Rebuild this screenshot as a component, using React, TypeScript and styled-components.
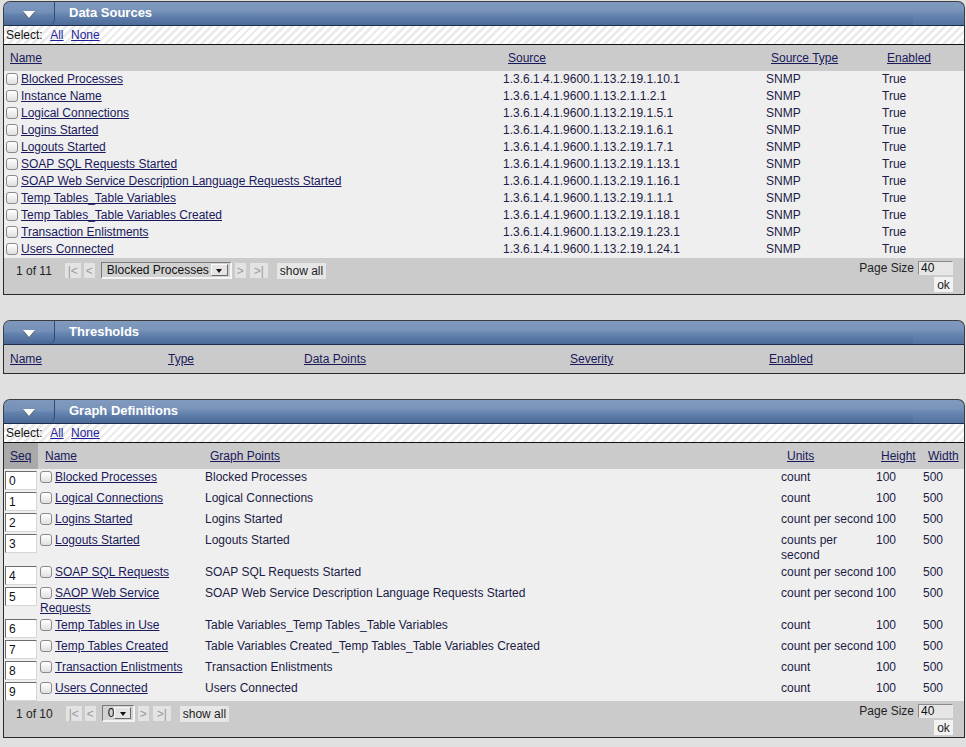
import React from "react";
import styled, { createGlobalStyle } from "styled-components";

const GlobalStyle = createGlobalStyle`
  html, body { margin: 0; padding: 0; background: #e0e0e0; }
  body {
    font-family: "Liberation Sans", Arial, Helvetica, sans-serif;
    font-size: 12px;
    color: #1b1b45;
  }
  * { box-sizing: border-box; }
`;

const Page = styled.div`
  display: flex;
  flex-direction: column;
  gap: 25px;
  padding: 1px 1px 9px 3px;
`;

const Panel = styled.section`
  display: flex;
  flex-direction: column;
`;

const Header = styled.div`
  display: flex;
  align-items: stretch;
  height: 25px;
  border: 1px solid #3e3e3e;
  border-bottom-color: #1d2d4c;
  border-radius: 7px 7px 0 0;
  overflow: hidden;
  position: relative;
  background: linear-gradient(
    to bottom,
    #819abf 0%,
    #7993b9 40%,
    #6b89b3 50%,
    #5a79a6 72%,
    #4c6b99 100%
  );
  &::after {
    content: "";
    position: absolute;
    right: 0;
    bottom: 0;
    width: 51px;
    height: 13px;
    border-top-left-radius: 6px;
    background: linear-gradient(to bottom, #6f8cb5 0%, #5877a4 100%);
    opacity: 0.6;
  }
`;

const Toggle = styled.div`
  width: 51px;
  display: flex;
  align-items: center;
  justify-content: center;
  border-right: 1px solid #2f4a76;
  background: linear-gradient(
    to bottom,
    #7d97bd 0%,
    #7590b7 45%,
    #6282ae 55%,
    #4a6897 100%
  );
  border-bottom-right-radius: 6px;
`;

const Triangle = styled.span`
  width: 0;
  height: 0;
  border-left: 6px solid transparent;
  border-right: 6px solid transparent;
  border-top: 7px solid #ffffff;
  filter: drop-shadow(0 1px 0 #5a5a5a);
  margin-top: 1px;
`;

const Title = styled.div`
  padding-left: 14px;
  color: #ffffff;
  font-weight: bold;
  font-size: 13px;
  line-height: 22px;
`;

const Body = styled.div`
  border-left: 1px solid #2a2a2a;
  border-right: 1px solid #2a2a2a;
  border-bottom: 1px solid #2a2a2a;
  display: flex;
  flex-direction: column;
`;

const SelectBar = styled.div`
  height: 19px;
  border-bottom: 1px solid #111;
  display: flex;
  align-items: center;
  gap: 7.5px;
  padding-left: 2px;
  color: #111;
  background: repeating-linear-gradient(
    135deg,
    #ffffff 0px,
    #ffffff 3px,
    #ebebeb 3px,
    #ebebeb 5.7px
  );
`;

const SelLink = styled.a`
  color: #1f1f9c;
  text-decoration: underline;
  cursor: pointer;
`;

const GridRow = styled.div<{ $cols: string; $h?: number; $bg: string }>`
  display: grid;
  grid-template-columns: ${(p) => p.$cols};
  background: ${(p) => p.$bg};
  ${(p) => (p.$h ? `height: ${p.$h}px;` : "")}
  align-items: stretch;
`;

const HeadCell = styled.div<{ $pl?: number; $active?: boolean }>`
  display: flex;
  align-items: center;
  padding-left: ${(p) => p.$pl ?? 6}px;
  background: ${(p) => (p.$active ? "#a9a9a9" : "transparent")};
  white-space: nowrap;
`;

const Cell = styled.div<{ $pl?: number }>`
  padding: 1px 0 1px ${(p) => p.$pl ?? 1}px;
  line-height: 15px;
  min-width: 0;
`;

const Link = styled.a`
  color: #19195c;
  text-decoration: underline;
  cursor: pointer;
`;

const Check = styled.span`
  display: inline-block;
  width: 12px;
  height: 12px;
  border: 1px solid #8a8a8a;
  border-radius: 3px;
  background: linear-gradient(to bottom, #ffffff, #e0e0e0);
  vertical-align: -2px;
  margin-right: 3px;
`;

const SeqInput = styled.input`
  width: 32px;
  height: 19px;
  margin: 1px 0 -1px 0;
  padding: 0 3px;
  border: 1px solid;
  border-color: #6c6c6c #d6d6d6 #d6d6d6 #6c6c6c;
  background: #ffffff;
  font-family: inherit;
  font-size: 12px;
  color: #111;
  display: block;
`;

/* ---------- Pager ---------- */

const Pager = styled.div`
  height: 36px;
  background: #cbcbcb;
  display: flex;
  justify-content: space-between;
  align-items: flex-start;
  padding: 3px 11px 0 12px;
  color: #222;
`;

const PagerLeft = styled.div`
  display: flex;
  align-items: center;
  height: 19px;
  white-space: nowrap;
`;

const CountText = styled.span`
  margin-right: 13px;
`;

const NavBtn = styled.span<{ $w: number; $ml?: number }>`
  display: inline-flex;
  align-items: center;
  justify-content: center;
  width: ${(p) => p.$w}px;
  height: 15px;
  margin-left: ${(p) => p.$ml ?? 0}px;
  background: #e3e3e3;
  color: #9a9a9a;
  font-size: 12px;
`;

const DropDown = styled.div<{ $w: number }>`
  display: inline-flex;
  align-items: center;
  width: ${(p) => p.$w}px;
  height: 17px;
  margin-left: 6px;
  padding: 0 2px 0 5px;
  border: 1px solid;
  border-width: 1px 2px 2px 1px;
  border-color: #7a7a7a #f4f4f4 #f4f4f4 #7a7a7a;
  background: #d2d2d2;
  color: #111;
  white-space: nowrap;
`;

const DropArrow = styled.span`
  width: 17px;
  height: 12px;
  margin-left: auto;
  flex-shrink: 0;
  display: inline-flex;
  align-items: center;
  justify-content: center;
  background: #e4e4e4;
  border: 1px solid;
  border-color: #fafafa #6a6a6a #6a6a6a #fafafa;
  &::after {
    content: "";
    border-left: 3.5px solid transparent;
    border-right: 3.5px solid transparent;
    border-top: 4px solid #111;
    margin-top: 1px;
  }
`;

const ShowAll = styled.span`
  display: inline-flex;
  align-items: center;
  height: 16px;
  margin-left: 9px;
  padding: 0 3px;
  background: #e6e6e6;
  color: #222;
`;

const PagerRight = styled.div`
  display: flex;
  flex-direction: column;
  align-items: flex-end;
  gap: 2px;
`;

const SizeRow = styled.div`
  display: flex;
  align-items: center;
  gap: 4px;
`;

const SizeInput = styled.input`
  width: 35px;
  height: 14px;
  padding: 0 2px;
  border: 1px solid;
  border-color: #8a8a8a #e8e8e8 #e8e8e8 #8a8a8a;
  background: #e6e6e6;
  font-family: inherit;
  font-size: 12px;
  color: #111;
`;

const OkBtn = styled.span`
  display: inline-flex;
  align-items: center;
  justify-content: center;
  width: 19px;
  height: 15px;
  background: #f2f2f2;
  color: #222;
`;

type PagerProps = { count: string; current: string; dropWidth: number };

function PagerBar({ count, current, dropWidth }: PagerProps) {
  return (
    <Pager>
      <PagerLeft>
        <CountText>{count}</CountText>
        <NavBtn $w={16} $ml={0}>|&lt;</NavBtn>
        <NavBtn $w={11} $ml={3}>&lt;</NavBtn>
        <DropDown $w={dropWidth}>
          <span>{current}</span>
          <DropArrow />
        </DropDown>
        <NavBtn $w={11} $ml={3}>&gt;</NavBtn>
        <NavBtn $w={18} $ml={4}>&gt;|</NavBtn>
        <ShowAll>show all</ShowAll>
      </PagerLeft>
      <PagerRight>
        <SizeRow>
          <span>Page Size</span>
          <SizeInput readOnly value="40" />
        </SizeRow>
        <OkBtn>ok</OkBtn>
      </PagerRight>
    </Pager>
  );
}

function PanelHeader({ title }: { title: string }) {
  return (
    <Header>
      <Toggle>
        <Triangle />
      </Toggle>
      <Title>{title}</Title>
    </Header>
  );
}

function Selector() {
  return (
    <SelectBar>
      <span>Select:</span>
      <SelLink>All</SelLink>
      <SelLink>None</SelLink>
    </SelectBar>
  );
}

/* ---------- Data ---------- */

const dsRows: [string, string][] = [
  ["Blocked Processes", "1.3.6.1.4.1.9600.1.13.2.19.1.10.1"],
  ["Instance Name", "1.3.6.1.4.1.9600.1.13.2.1.1.2.1"],
  ["Logical Connections", "1.3.6.1.4.1.9600.1.13.2.19.1.5.1"],
  ["Logins Started", "1.3.6.1.4.1.9600.1.13.2.19.1.6.1"],
  ["Logouts Started", "1.3.6.1.4.1.9600.1.13.2.19.1.7.1"],
  ["SOAP SQL Requests Started", "1.3.6.1.4.1.9600.1.13.2.19.1.13.1"],
  [
    "SOAP Web Service Description Language Requests Started",
    "1.3.6.1.4.1.9600.1.13.2.19.1.16.1",
  ],
  ["Temp Tables_Table Variables", "1.3.6.1.4.1.9600.1.13.2.19.1.1.1"],
  ["Temp Tables_Table Variables Created", "1.3.6.1.4.1.9600.1.13.2.19.1.18.1"],
  ["Transaction Enlistments", "1.3.6.1.4.1.9600.1.13.2.19.1.23.1"],
  ["Users Connected", "1.3.6.1.4.1.9600.1.13.2.19.1.24.1"],
];

const gdRows: [string, string, string][] = [
  ["Blocked Processes", "Blocked Processes", "count"],
  ["Logical Connections", "Logical Connections", "count"],
  ["Logins Started", "Logins Started", "count per second"],
  ["Logouts Started", "Logouts Started", "counts per second"],
  ["SOAP SQL Requests", "SOAP SQL Requests Started", "count per second"],
  [
    "SAOP Web Service Requests",
    "SOAP Web Service Description Language Requests Started",
    "count per second",
  ],
  ["Temp Tables in Use", "Table Variables_Temp Tables_Table Variables", "count"],
  [
    "Temp Tables Created",
    "Table Variables Created_Temp Tables_Table Variables Created",
    "count per second",
  ],
  ["Transaction Enlistments", "Transaction Enlistments", "count"],
  ["Users Connected", "Users Connected", "count"],
];

const DS_COLS = "498px 263px 116px 1fr";
const TH_COLS = "158px 136px 266px 199px 1fr";
const GD_COLS = "34px 165px 576px 95px 47px 1fr";

const HEAD_BG = "#cbcbcb";
const ROW_BG = "#efefef";

export default function App() {
  return (
    <>
      <GlobalStyle />
      <Page>
        {/* Data Sources */}
        <Panel>
          <PanelHeader title="Data Sources" />
          <Body>
            <Selector />
            <GridRow $cols={DS_COLS} $h={26} $bg={HEAD_BG}>
              <HeadCell><Link>Name</Link></HeadCell>
              <HeadCell><Link>Source</Link></HeadCell>
              <HeadCell><Link>Source Type</Link></HeadCell>
              <HeadCell><Link>Enabled</Link></HeadCell>
            </GridRow>
            {dsRows.map(([name, oid]) => (
              <GridRow key={name} $cols={DS_COLS} $h={17} $bg={ROW_BG}>
                <Cell $pl={2}>
                  <Check />
                  <Link>{name}</Link>
                </Cell>
                <Cell>{oid}</Cell>
                <Cell>SNMP</Cell>
                <Cell>True</Cell>
              </GridRow>
            ))}
            <PagerBar count="1 of 11" current="Blocked Processes" dropWidth={131} />
          </Body>
        </Panel>

        {/* Thresholds */}
        <Panel>
          <PanelHeader title="Thresholds" />
          <Body>
            <GridRow $cols={TH_COLS} $h={28} $bg={HEAD_BG}>
              <HeadCell><Link>Name</Link></HeadCell>
              <HeadCell><Link>Type</Link></HeadCell>
              <HeadCell><Link>Data Points</Link></HeadCell>
              <HeadCell><Link>Severity</Link></HeadCell>
              <HeadCell><Link>Enabled</Link></HeadCell>
            </GridRow>
          </Body>
        </Panel>

        {/* Graph Definitions */}
        <Panel>
          <PanelHeader title="Graph Definitions" />
          <Body>
            <Selector />
            <GridRow $cols={GD_COLS} $h={26} $bg={HEAD_BG}>
              <HeadCell $active><Link>Seq</Link></HeadCell>
              <HeadCell $pl={7}><Link>Name</Link></HeadCell>
              <HeadCell $pl={7}><Link>Graph Points</Link></HeadCell>
              <HeadCell $pl={8}><Link>Units</Link></HeadCell>
              <HeadCell $pl={7}><Link>Height</Link></HeadCell>
              <HeadCell $pl={7}><Link>Width</Link></HeadCell>
            </GridRow>
            {gdRows.map(([name, points, units], i) => (
              <GridRow key={name} $cols={GD_COLS} $bg={ROW_BG}>
                <Cell $pl={1}>
                  <SeqInput readOnly value={String(i)} />
                </Cell>
                <Cell $pl={2}>
                  <Check />
                  <Link>{name}</Link>
                </Cell>
                <Cell $pl={2}>{points}</Cell>
                <Cell $pl={2}>{units}</Cell>
                <Cell $pl={2}>100</Cell>
                <Cell $pl={2}>500</Cell>
              </GridRow>
            ))}
            <PagerBar count="1 of 10" current="0" dropWidth={33} />
          </Body>
        </Panel>
      </Page>
    </>
  );
}
